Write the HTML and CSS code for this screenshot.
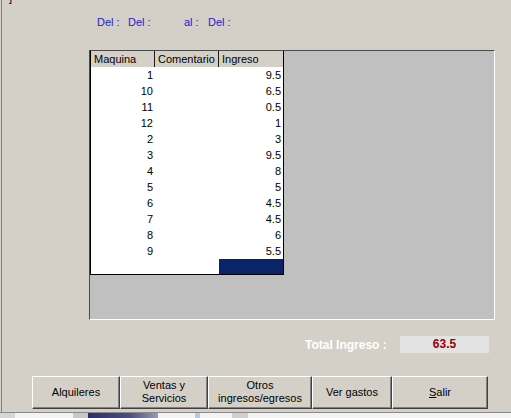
FILE: index.html
```html
<!DOCTYPE html>
<html>
<head>
<meta charset="utf-8">
<link rel="stylesheet" href="styles.css">
</head>
<body>
<div class="win">
  <div class="frag"><span>]</span></div>
  <div class="dates"><span class="d1">Del :</span><span class="d2">Del :</span><span class="d3">al :</span><span>Del :</span></div>
  <div class="grid">
    <div class="tbl">
      <div class="row head"><div class="c">Maquina</div><div class="c">Comentario</div><div class="c">Ingreso</div></div>
      <div class="row"><div class="c n">1</div><div class="c"></div><div class="c n">9.5</div></div>
      <div class="row"><div class="c n">10</div><div class="c"></div><div class="c n">6.5</div></div>
      <div class="row"><div class="c n">11</div><div class="c"></div><div class="c n">0.5</div></div>
      <div class="row"><div class="c n">12</div><div class="c"></div><div class="c n">1</div></div>
      <div class="row"><div class="c n">2</div><div class="c"></div><div class="c n">3</div></div>
      <div class="row"><div class="c n">3</div><div class="c"></div><div class="c n">9.5</div></div>
      <div class="row"><div class="c n">4</div><div class="c"></div><div class="c n">8</div></div>
      <div class="row"><div class="c n">5</div><div class="c"></div><div class="c n">5</div></div>
      <div class="row"><div class="c n">6</div><div class="c"></div><div class="c n">4.5</div></div>
      <div class="row"><div class="c n">7</div><div class="c"></div><div class="c n">4.5</div></div>
      <div class="row"><div class="c n">8</div><div class="c"></div><div class="c n">6</div></div>
      <div class="row"><div class="c n">9</div><div class="c"></div><div class="c n">5.5</div></div>
      <div class="row blank"><div class="c"></div><div class="c"></div><div class="c sel"></div></div>
    </div>
  </div>
  <div class="total"><span class="tl">Total Ingreso :</span><span class="tv">63.5</span></div>
  <div class="btns">
    <div class="btn w1">Alquileres</div>
    <div class="btn w2">Ventas y<br>Servicios</div>
    <div class="btn w3">Otros<br>ingresos/egresos</div>
    <div class="btn w4">Ver gastos</div>
    <div class="btn w5"><span class="u">S</span>alir</div>
  </div>
</div>
<div class="bottom">
  <div class="s s1"></div>
  <div class="s s2"></div>
  <div class="s s3"></div>
  <div class="s s4"></div>
  <div class="s s5"></div>
  <div class="s s6"></div>
  <div class="s s7"></div>
  <div class="s s8"></div>
</div>
</body>
</html>
```
FILE: styles.css
```css
html, body {
  margin: 0;
  padding: 0;
}
body {
  width: 511px;
  height: 418px;
  overflow: hidden;
  background: #D4D0C8;
  font-family: "Liberation Sans", Arial, sans-serif;
  font-size: 11px;
  color: #000;
}
.win {
  height: 412px;
  margin-left: 1px;
  border-left: 1px solid #808080;
  box-sizing: border-box;
  overflow: hidden;
}
.frag {
  height: 6px;
  overflow: hidden;
  padding-left: 7px;
}
.frag span {
  display: block;
  margin-top: -8px;
  line-height: 13px;
}
.dates {
  margin-top: 10px;
  padding-left: 95px;
  line-height: 13px;
  height: 13px;
  color: #1c1cd6;
  display: flex;
}
.dates .d1 { width: 31px; }
.dates .d2 { width: 56px; }
.dates .d3 { width: 24px; }
.grid {
  margin-top: 21px;
  margin-left: 87px;
  width: 406px;
  height: 270px;
  box-sizing: border-box;
  border-top: 1px solid #4a4a4a;
  border-left: 1px solid #4a4a4a;
  border-right: 1px solid #ffffff;
  border-bottom: 1px solid #ffffff;
  background: #C0C0C0;
}
.tbl {
  width: 194px;
  box-sizing: border-box;
  border-left: 1px solid #000;
  border-right: 1px solid #000;
  border-bottom: 1px solid #000;
  background: #fff;
}
.row {
  display: flex;
  height: 16px;
  line-height: 16px;
}
.row .c {
  width: 64px;
  box-sizing: border-box;
  white-space: nowrap;
  overflow: hidden;
}
.row .c.n {
  text-align: right;
  padding-right: 2px;
}
.head {
  background: #D4D0C8;
}
.head .c {
  padding-left: 3px;
  border-right: 1px solid #1a1a1a;
}
.head .c:last-child {
  border-right: none;
}
.row:not(.head) .c:nth-child(1),
.row:not(.head) .c:nth-child(2) {
  width: 64px;
}
.blank {
  height: 15px;
}
.sel {
  background: #0A246A;
}
.total {
  margin-top: 16px;
  padding-left: 303px;
  display: flex;
  align-items: center;
  height: 17px;
}
.tl {
  width: 95px;
  color: #ffffff;
  font-weight: bold;
  font-size: 12px;
}
.tv {
  width: 89px;
  height: 17px;
  line-height: 17px;
  background: #E3E3E3;
  color: #990000;
  font-weight: bold;
  font-size: 12px;
  text-align: center;
}
.btns {
  margin-top: 23px;
  padding-left: 30px;
  display: flex;
}
.btn {
  height: 33px;
  box-sizing: border-box;
  border-top: 1px solid #ffffff;
  border-left: 1px solid #ffffff;
  border-right: 1px solid #404040;
  border-bottom: 1px solid #404040;
  box-shadow: inset -1px -1px 0 #808080;
  display: flex;
  align-items: center;
  justify-content: center;
  text-align: center;
  line-height: 13px;
  padding-bottom: 1px;
}
.w1 { width: 88px; }
.w2 { width: 88px; }
.w3 { width: 104px; }
.w4 { width: 80px; }
.w5 { width: 96px; }
.u { text-decoration: underline; }
.bottom {
  height: 6px;
  border-top: 1px solid #8a8a8a;
  background: #f4f4f4;
  display: flex;
}
.s { height: 5px; }
.s1 { width: 15px; background: #d6d6d6; }
.s2 { width: 58px; }
.s3 { width: 15px; background: #c8c8c8; }
.s4 { width: 70px; background: linear-gradient(90deg, #2a2f6a, #4a4f80 60%, #9a9ab0); }
.s5 { width: 37px; }
.s6 { width: 5px; background: #b8c8e8; }
.s7 { width: 32px; }
.s8 { width: 16px; background: #cfcfcf; }
```
